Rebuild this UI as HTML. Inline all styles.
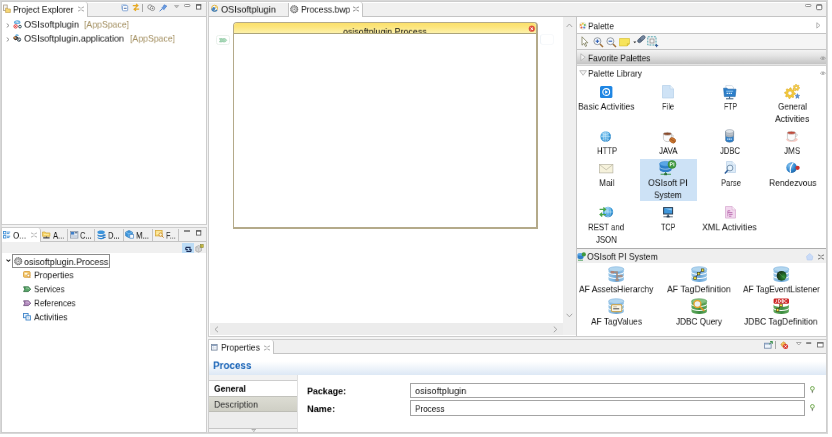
<!DOCTYPE html>
<html><head><meta charset="utf-8"><title>IDE</title>
<style>
html,body{margin:0;padding:0;}
body{width:832px;height:437px;overflow:hidden;position:relative;background:#ffffff;font-family:"Liberation Sans",sans-serif;}
body div,body span,body svg{position:absolute;display:block;box-sizing:border-box;}
body span{white-space:pre;will-change:transform;}
</style></head><body>
<div style="left:0px;top:0px;width:828px;height:434px;background:#d8d8d8;"></div>
<div style="left:2px;top:2px;width:824px;height:430px;background:#f3f3f3;"></div>
<div style="left:1px;top:1px;width:206px;height:224px;background:#fff;border:1px solid #cdcdcd;"></div>
<div style="left:2px;top:2px;width:204px;height:1px;background:#fff;"></div>
<div style="left:2px;top:3px;width:204px;height:13px;background:#f0f0f0;"></div>
<div style="left:2px;top:16px;width:204px;height:1px;background:#c4c4c4;"></div>
<div style="left:2px;top:2px;width:86px;height:15px;background:#fff;border-right:1px solid #c4c4c4;border-top-right-radius:3px;"></div>
<span style="left:13.00px;top:2px;font-size:11px;line-height:18px;color:#111;transform:scale(0.7731,0.8273);transform-origin:0 0;">Project Explorer</span>
<span style="left:24.00px;top:16px;font-size:11px;line-height:20px;color:#111;transform:scale(0.8329,0.8273);transform-origin:0 0;">OSIsoftplugin</span>
<span style="left:84.00px;top:16px;font-size:11px;line-height:20px;color:#a38f60;transform:scale(0.7912,0.8273);transform-origin:0 0;">[AppSpace]</span>
<span style="left:24.00px;top:30px;font-size:11px;line-height:20px;color:#111;transform:scale(0.8218,0.8273);transform-origin:0 0;">OSIsoftplugin.application</span>
<span style="left:130.00px;top:30px;font-size:11px;line-height:20px;color:#a38f60;transform:scale(0.7912,0.8273);transform-origin:0 0;">[AppSpace]</span>
<svg style="left:3px;top:4px" width="9" height="9" viewBox="0 0 9 9">
<rect x="0.6" y="1" width="3.6" height="5.6" fill="#f4f4f4" stroke="#a89a86" stroke-width="0.8"/>
<path d="M2.6 4.2h1.6l0.7 0.8h2.4v3.6h-4.7z" fill="#f7d774" stroke="#c9a85c" stroke-width="0.8" stroke-linejoin="round"/>
</svg>
<svg style="left:78px;top:5.5px" width="6" height="6" viewBox="0 0 6 6"><path d="M0.7 0.7l1.6 1.6 0.7-0.7 0.7 0.7 1.6-1.6M0.7 5.3l1.6-1.6 0.7 0.7 0.7-0.7 1.6 1.6M0.7 0.7v1.2M0.7 5.3v-1.2M5.3 0.7v1.2M5.3 5.3v-1.2" fill="none" stroke="#9a9a9a" stroke-width="0.7"/></svg>
<svg style="left:121px;top:3.5px" width="8" height="8" viewBox="0 0 8 8">
<rect x="0.5" y="0.5" width="5" height="5" rx="0.8" fill="#f2f7fc" stroke="#a9c2e2" stroke-width="0.8"/>
<rect x="1.5" y="1.6" width="5.2" height="5.2" rx="0.6" fill="#fff" stroke="#7fa3d4" stroke-width="0.9"/>
<rect x="2.8" y="3.8" width="2.8" height="0.9" fill="#3a5f9a"/>
</svg>
<svg style="left:132px;top:3px" width="8" height="9" viewBox="0 0 8 9">
<path d="M0.8 2.6h4.6M4 0.9l1.9 1.7-1.9 1.7" fill="none" stroke="#e6a822" stroke-width="1.2"/>
<path d="M7.2 6.2h-4.6M4 4.5l-1.9 1.7 1.9 1.7" fill="none" stroke="#e6a822" stroke-width="1.2"/>
<path d="M3.2 3.4l1.4 2" stroke="#f0c766" stroke-width="0.9"/>
</svg>
<div style="left:142px;top:3.5px;width:1px;height:8px;background:#a8a8a8;"></div>
<svg style="left:147px;top:3.5px" width="9" height="8" viewBox="0 0 9 8">
<circle cx="3" cy="3" r="2.2" fill="#f4f4f4" stroke="#8c8c8c" stroke-width="0.9"/>
<circle cx="5.4" cy="4.4" r="2.2" fill="#fafafa" stroke="#8c8c8c" stroke-width="0.9"/>
<path d="M4.6 4.4h1.8M5.5 3.5v1.8" stroke="#777" stroke-width="0.7"/>
</svg>
<svg style="left:159px;top:3.5px" width="9" height="8" viewBox="0 0 9 8">
<path d="M5.2 0.8l2.6 1.2-2.8 3.4-2-1.0z" fill="#6a9be0" stroke="#3f76c8" stroke-width="0.6" stroke-linejoin="round"/>
<path d="M3.6 4.6l-3 2.6" stroke="#3f76c8" stroke-width="0.9"/>
<path d="M2.4 3.6l3.2 2.2" stroke="#7aa7e6" stroke-width="0.8"/>
</svg>
<svg style="left:174.2px;top:5px" width="6" height="4" viewBox="0 0 6 4"><path d="M0.5 0.5h4.2l-2.1 2.4z" fill="#c4c4c4" stroke="#9a9a9a" stroke-width="0.6"/></svg>
<svg style="left:184px;top:4px" width="7" height="4" viewBox="0 0 7 4"><rect x="0.5" y="0.5" width="5.4" height="2" rx="0.8" fill="#fff" stroke="#8a8a8a" stroke-width="0.9"/></svg>
<svg style="left:196px;top:4px" width="6" height="7" viewBox="0 0 6 7"><rect x="0.5" y="0.9" width="4.3" height="4.2" fill="#fff" stroke="#5a5a5a" stroke-width="0.85"/><rect x="0.1" y="0.3" width="5.1" height="1.2" fill="#555"/></svg>
<svg style="left:6px;top:22.5px" width="4" height="5" viewBox="0 0 4 5"><path d="M0.7 0.5l2.3 2-2.3 2" fill="none" stroke="#8a8a8a" stroke-width="0.9"/></svg>
<svg style="left:6px;top:36.5px" width="4" height="5" viewBox="0 0 4 5"><path d="M0.7 0.5l2.3 2-2.3 2" fill="none" stroke="#8a8a8a" stroke-width="0.9"/></svg>
<svg style="left:12.6px;top:20.2px" width="9" height="9" viewBox="0 0 9 9">
<path d="M0.9 2.6c0-1.4 1.6-2.3 3.4-2.3s3.2 0.9 3.2 2.2c0 1.2-1.4 1.7-3.2 1.7s-3.4-0.4-3.4-1.6z" fill="#62acde"/>
<path d="M2.2 2.2h4.2M4.2 0.9v2.6M2.8 1.2l2.8 2" stroke="#e4f1fa" stroke-width="0.5"/>
<circle cx="2.6" cy="6.4" r="1.7" fill="#fff" stroke="#e03a3a" stroke-width="1"/>
<path d="M1.9 5.6l1.6 0.8-1.6 0.8z" fill="#e03a3a"/>
<circle cx="7" cy="6.6" r="1.35" fill="#f2f6f8" stroke="#2f4650" stroke-width="0.9"/>
</svg>
<svg style="left:13.2px;top:34px" width="9" height="8" viewBox="0 0 9 8">
<path d="M2 1.8c0.2-1 1.2-1.6 2.2-1.5 1 0.1 1.6 0.8 1.6 1.7z" fill="#6ab2e0"/>
<path d="M0.5 3l2.6-1 2 1.2-0.6 2.4-2.2 0.6-1.8-1.4z" fill="#3a2a22"/>
<path d="M0.6 3.2l1.4-0.6 0.6 1.4-1.2 0.8z" fill="#d98a3a"/>
<circle cx="2.8" cy="4" r="0.8" fill="#d9d2c6"/>
<circle cx="6" cy="5.6" r="1.7" fill="#f4f7f9" stroke="#34444e" stroke-width="0.9"/>
<path d="M4.2 3.4l2.6 3.6" stroke="#34444e" stroke-width="0.7"/>
</svg>
<div style="left:1px;top:227px;width:206px;height:206px;background:#fff;border:1px solid #cdcdcd;"></div>
<div style="left:2px;top:228px;width:204px;height:13px;background:#f0f0f0;"></div>
<div style="left:2px;top:241px;width:204px;height:1px;background:#c4c4c4;"></div>
<div style="left:2px;top:228px;width:39px;height:14px;background:#fff;border-right:1px solid #c4c4c4;border-top-right-radius:3px;"></div>
<span style="left:13.00px;top:227px;font-size:11px;line-height:20px;color:#111;transform:scale(0.7335,0.8273);transform-origin:0 0;">O...</span>
<span style="left:52.50px;top:227px;font-size:11px;line-height:20px;color:#111;transform:scale(0.6968,0.8273);transform-origin:0 0;">A...</span>
<span style="left:79.50px;top:227px;font-size:11px;line-height:20px;color:#111;transform:scale(0.6720,0.8273);transform-origin:0 0;">C...</span>
<span style="left:108.00px;top:227px;font-size:11px;line-height:20px;color:#111;transform:scale(0.6779,0.8273);transform-origin:0 0;">D...</span>
<span style="left:135.80px;top:227px;font-size:11px;line-height:20px;color:#111;transform:scale(0.7092,0.8273);transform-origin:0 0;">M...</span>
<span style="left:165.60px;top:227px;font-size:11px;line-height:20px;color:#111;transform:scale(0.6613,0.8273);transform-origin:0 0;">F...</span>
<div style="left:67px;top:229px;width:1px;height:12px;background:#c4c4c4;"></div>
<div style="left:94px;top:229px;width:1px;height:12px;background:#c4c4c4;"></div>
<div style="left:123px;top:229px;width:1px;height:12px;background:#c4c4c4;"></div>
<div style="left:152.3px;top:229px;width:1px;height:12px;background:#c4c4c4;"></div>
<div style="left:178.3px;top:229px;width:1px;height:12px;background:#c4c4c4;"></div>
<div style="left:2px;top:242px;width:204px;height:11.2px;background:#f0f0f0;"></div>
<div style="left:182.3px;top:243px;width:11.4px;height:10.4px;background:#bcdcf6;"></div>
<div style="left:12px;top:254.4px;width:98px;height:13.4px;background:#fff;border:1px solid #8c8c8c;"></div>
<span style="left:24.00px;top:251px;font-size:11px;line-height:26px;color:#111;transform:scale(0.8110,0.8273);transform-origin:0 0;">osisoftplugin.Process</span>
<span style="left:33.50px;top:265px;font-size:11px;line-height:24px;color:#111;transform:scale(0.7879,0.8273);transform-origin:0 0;">Properties</span>
<span style="left:33.50px;top:284px;font-size:11px;line-height:12px;color:#111;transform:scale(0.7231,0.8273);transform-origin:0 0;">Services</span>
<span style="left:33.50px;top:298px;font-size:11px;line-height:12px;color:#111;transform:scale(0.7378,0.8273);transform-origin:0 0;">References</span>
<span style="left:33.50px;top:312px;font-size:11px;line-height:12px;color:#111;transform:scale(0.7719,0.8273);transform-origin:0 0;">Activities</span>
<svg style="left:3px;top:231px" width="8" height="8" viewBox="0 0 8 8">
<rect x="0.5" y="0.5" width="2.4" height="2.4" fill="#fff" stroke="#3f8fd6" stroke-width="0.9"/>
<rect x="0.5" y="4.6" width="2.4" height="2.4" fill="#fff" stroke="#3f8fd6" stroke-width="0.9"/>
<path d="M4 1.1h3.2M4 2.6h2.4M4 5.2h3.2M4 6.6h2.4" stroke="#3f8fd6" stroke-width="0.9"/>
</svg>
<svg style="left:31px;top:232px" width="6" height="6" viewBox="0 0 6 6"><path d="M0.7 0.7l1.6 1.6 0.7-0.7 0.7 0.7 1.6-1.6M0.7 5.3l1.6-1.6 0.7 0.7 0.7-0.7 1.6 1.6M0.7 0.7v1.2M0.7 5.3v-1.2M5.3 0.7v1.2M5.3 5.3v-1.2" fill="none" stroke="#a8a8a8" stroke-width="0.7"/></svg>
<svg style="left:42px;top:231px" width="9" height="8" viewBox="0 0 9 8">
<path d="M0.5 1h2.6l0.8 0.9h4v3.4h-7.4z" fill="#f6d56a" stroke="#d2a83c" stroke-width="0.7"/>
<path d="M1.2 6.9h6.4" stroke="#1a1a1a" stroke-width="1"/><path d="M4.4 5.4v1.4" stroke="#3a3a3a" stroke-width="0.8"/>
<path d="M2 3.6h4.8" stroke="#fff2b8" stroke-width="0.7"/>
</svg>
<svg style="left:69.5px;top:231px" width="9" height="8" viewBox="0 0 9 8">
<rect x="0.5" y="0.5" width="7.4" height="6.6" fill="#e9eef5" stroke="#8b98ab" stroke-width="0.8"/>
<rect x="1" y="1" width="3.2" height="2.6" fill="#3f7fc9"/>
<rect x="4.8" y="1" width="2.6" height="1.4" fill="#6d7f96"/>
<path d="M1 5h6.4" stroke="#9fb0c6" stroke-width="0.8"/>
</svg>
<svg style="left:96.6px;top:229.6px" width="10" height="10" viewBox="0 0 10 10">
<path d="M0.5 1.8c0-0.8 1.6-1.4 3.6-1.4s3.6 0.6 3.6 1.4v0.9c0 0.8-1.6 1.4-3.6 1.4s-3.6-0.6-3.6-1.4z" fill="#3b94dc"/>
<path d="M0.5 4.2c0.6 0.7 2 1 3.6 1s3-0.3 3.6-1v1.3c0 0.8-1.6 1.4-3.6 1.4s-3.6-0.6-3.6-1.4z" fill="#2f86d2"/>
<path d="M0.5 6.9c0.6 0.7 2 1 3.6 1s3-0.3 3.6-1v0.9c0 0.8-1.6 1.4-3.6 1.4s-3.6-0.6-3.6-1.4z" fill="#2f86d2"/>
<path d="M5.6 4.4h3v1.3h-3zM5.6 6.8h3v1.3h-3z" fill="#2a78c4"/>
</svg>
<svg style="left:125px;top:230.2px" width="10" height="9" viewBox="0 0 10 9">
<path d="M4 0.4l3.4 1.8v3.6l-3.4 2-3.4-2v-3.6z" fill="#3f97dc" stroke="#1f6fb5" stroke-width="0.6"/>
<path d="M0.8 2.2l3.2 1.6 3.2-1.6M4 3.8v3.8" stroke="#9cd0f5" stroke-width="0.6" fill="none"/>
<rect x="4.8" y="4.4" width="3.6" height="3.8" fill="#f7fbff" stroke="#4a87c4" stroke-width="0.7"/>
</svg>
<svg style="left:155px;top:230.3px" width="10" height="9" viewBox="0 0 10 9">
<rect x="0.5" y="0.5" width="6.6" height="5.4" fill="#f9dc7a" stroke="#d6a93a" stroke-width="0.8"/>
<path d="M1.4 2h4.8M1.4 3.6h3" stroke="#fff4c2" stroke-width="0.8"/>
<circle cx="5.6" cy="4.6" r="1.7" fill="#fdf3cf" stroke="#c98b2e" stroke-width="0.8"/>
<path d="M6.8 5.8l1.8 1.8" stroke="#c98b2e" stroke-width="1"/>
</svg>
<div style="left:184px;top:230.3px;width:6px;height:1.5px;background:#8a8a8a;"></div>
<svg style="left:195.8px;top:229.9px" width="6" height="7" viewBox="0 0 6 7"><rect x="0.5" y="0.9" width="4.3" height="4.2" fill="#fff" stroke="#5a5a5a" stroke-width="0.85"/><rect x="0.1" y="0.3" width="5.1" height="1.2" fill="#555"/></svg>
<svg style="left:185px;top:245.5px" width="7" height="7" viewBox="0 0 7 7">
<path d="M0.8 1.4h4.8M0.8 1.4v2.4M0.8 3.6h2" stroke="#1e2f5a" stroke-width="1.2" fill="none"/>
<path d="M6 5.4h-4.6M6 5.4v-2.4M6 3.2h-2" stroke="#1e2f5a" stroke-width="1.2" fill="none"/>
</svg>
<svg style="left:195px;top:244px" width="9" height="9" viewBox="0 0 9 9">
<path d="M0.8 3l2.8-1.4 2.8 1.2v4l-2.8 1.4-2.8-1.2z" fill="#d9d9d9" stroke="#a3a3a3" stroke-width="0.7"/>
<path d="M0.8 3l2.8 1.2 2.8-1.4M3.6 4.2v4" stroke="#b9b9b9" stroke-width="0.6" fill="none"/>
<rect x="5.4" y="0.6" width="2.8" height="2.8" fill="#e8d44a" stroke="#8a8a3a" stroke-width="0.7"/>
<rect x="6.3" y="1.5" width="1" height="1" fill="#6b6b2a"/>
</svg>
<svg style="left:5.6px;top:259.2px" width="5" height="4" viewBox="0 0 5 4"><path d="M0.5 0.7l1.9 1.7 1.9-1.7" fill="none" stroke="#222" stroke-width="1.05"/></svg>
<svg style="left:13.5px;top:256.7px" width="9" height="9" viewBox="0 0 9 9">
<circle cx="4.2" cy="4.2" r="3.5" fill="#cfcfcf" stroke="#6e6e6e" stroke-width="1.1" stroke-dasharray="1.3 0.45"/>
<circle cx="4.2" cy="4.2" r="2.2" fill="#f2f2f2" stroke="#858585" stroke-width="0.6"/>
<path d="M4.2 2.4a1.8 1.8 0 0 1 1.6 2.6" fill="none" stroke="#9a9a9a" stroke-width="0.6"/>
<circle cx="4.2" cy="4.2" r="0.8" fill="#7a7a7a"/>
</svg>
<svg style="left:23px;top:271.3px" width="9" height="8" viewBox="0 0 9 8">
<rect x="0.5" y="0.5" width="6.6" height="5.8" rx="1" fill="#f4c76a" stroke="#d59a35" stroke-width="0.8"/>
<rect x="1.6" y="1.8" width="2.8" height="1.8" fill="#fff7e0"/>
<circle cx="5.4" cy="4.6" r="1.3" fill="#fff" stroke="#c98b2e" stroke-width="0.6"/>
<path d="M6.2 5.6l1.2 1.4" stroke="#c98b2e" stroke-width="0.9"/>
</svg>
<svg style="left:22.8px;top:285.8px" width="9" height="7" viewBox="0 0 9 7"><path d="M0.6 0.8h4.8l2.4 2.4-2.4 2.4h-4.8l1.2-2.4z" fill="#5aa66a" stroke="#2d6e3e" stroke-width="0.8" stroke-linejoin="round"/><path d="M3 2h2l1 1.2" stroke="#fff" stroke-opacity="0.55" stroke-width="0.7" fill="none"/></svg>
<svg style="left:22.8px;top:299.8px" width="9" height="7" viewBox="0 0 9 7"><path d="M0.6 0.8h4.8l2.4 2.4-2.4 2.4h-4.8l1.2-2.4z" fill="#b58cc0" stroke="#6a4a78" stroke-width="0.8" stroke-linejoin="round"/><path d="M3 2h2l1 1.2" stroke="#fff" stroke-opacity="0.55" stroke-width="0.7" fill="none"/></svg>
<svg style="left:23.3px;top:313.2px" width="9" height="8" viewBox="0 0 9 8">
<rect x="0.5" y="0.5" width="4.6" height="4.2" fill="#eaf3fc" stroke="#3f85c9" stroke-width="0.9"/>
<rect x="3" y="2.8" width="4.4" height="4.2" fill="#fff" stroke="#3f85c9" stroke-width="0.9"/>
<path d="M4.4 4.9h1.8" stroke="#6fa3d8" stroke-width="0.8"/>
</svg>
<div style="left:208px;top:1px;width:619px;height:336px;background:#fff;border:1px solid #cdcdcd;"></div>
<div style="left:209px;top:2px;width:617px;height:1px;background:#fff;"></div>
<div style="left:209px;top:3px;width:617px;height:13px;background:#f0f0f0;"></div>
<div style="left:209px;top:16px;width:617px;height:1px;background:#c4c4c4;"></div>
<div style="left:288px;top:3px;width:1px;height:13px;background:#c4c4c4;"></div>
<div style="left:289px;top:2px;width:74px;height:15px;background:#fff;border-right:1px solid #c4c4c4;border-top-right-radius:3px;"></div>
<span style="left:220.50px;top:1px;font-size:11px;line-height:20px;color:#111;transform:scale(0.8298,0.8273);transform-origin:0 0;">OSIsoftplugin</span>
<span style="left:300.70px;top:1px;font-size:11px;line-height:20px;color:#111;transform:scale(0.7829,0.8273);transform-origin:0 0;">Process.bwp</span>
<div style="left:210px;top:323px;width:366px;height:12px;background:#ececec;"></div>
<div style="left:563px;top:17px;width:13px;height:318px;background:#efefef;"></div>
<div style="left:233px;top:22px;width:305px;height:207px;background:#fff;border:1px solid #b4aa8a;border-right-width:2px;border-bottom-width:2px;border-radius:4px 4px 0 0;"></div>
<div style="left:234px;top:23px;width:302px;height:10.6px;background:linear-gradient(#fbe06c,#fce57c 35%,#fdf3b2);border-radius:3px 3px 0 0;"></div>
<div style="left:234px;top:23px;width:303px;height:10.6px;overflow:hidden">
<span style="left:109.20px;top:0px;font-size:11px;line-height:20px;color:#111;transform:scale(0.8043,0.8455);transform-origin:0 0;">osisoftplugin.Process</span>
</div>
<div style="left:234px;top:33.4px;width:302px;height:1px;background:#aca47a;"></div>
<div style="left:540px;top:34px;width:14px;height:11px;background:#fff;border:1px solid #f7f9fb;border-left-color:#eef3f7;border-radius:3px;"></div>
<svg style="left:210.5px;top:4.3px" width="8" height="8" viewBox="0 0 8 8">
<circle cx="3.6" cy="4.2" r="3" fill="#f4f8fc" stroke="#e2b64a" stroke-width="1"/>
<path d="M0.8 4.6a2.8 2.8 0 0 0 5.2 1.2" fill="none" stroke="#3f7fbf" stroke-width="1.3"/>
<circle cx="2.8" cy="4.4" r="1.5" fill="#3f7fbf"/>
<circle cx="4.8" cy="3.2" r="1" fill="#f1cf6a"/>
</svg>
<svg style="left:289.9px;top:4.8px" width="9" height="9" viewBox="0 0 9 9">
<circle cx="4.2" cy="4.2" r="3.5" fill="#cfcfcf" stroke="#6e6e6e" stroke-width="1.1" stroke-dasharray="1.3 0.45"/>
<circle cx="4.2" cy="4.2" r="2.2" fill="#f2f2f2" stroke="#858585" stroke-width="0.6"/>
<path d="M4.2 2.4a1.8 1.8 0 0 1 1.6 2.6" fill="none" stroke="#9a9a9a" stroke-width="0.6"/>
<circle cx="4.2" cy="4.2" r="0.8" fill="#7a7a7a"/>
</svg>
<svg style="left:353.4px;top:5.9px" width="6" height="6" viewBox="0 0 6 6"><path d="M0.7 0.7l1.6 1.6 0.7-0.7 0.7 0.7 1.6-1.6M0.7 5.3l1.6-1.6 0.7 0.7 0.7-0.7 1.6 1.6M0.7 0.7v1.2M0.7 5.3v-1.2M5.3 0.7v1.2M5.3 5.3v-1.2" fill="none" stroke="#7a7a7a" stroke-width="0.7"/></svg>
<svg style="left:805px;top:4px" width="7" height="4" viewBox="0 0 7 4"><rect x="0.5" y="0.5" width="5.4" height="2" rx="0.8" fill="#fff" stroke="#8a8a8a" stroke-width="0.9"/></svg>
<svg style="left:816.4px;top:3.6px" width="7" height="8" viewBox="0 0 7 8"><rect x="0.6" y="0.9" width="5.2" height="4.8" rx="1" fill="#fff" stroke="#666" stroke-width="0.9"/><rect x="0.4" y="0.4" width="5.6" height="1.2" rx="0.5" fill="#6a6a6a"/></svg>
<svg style="left:527.6px;top:24.7px" width="8" height="8" viewBox="0 0 8 8">
<circle cx="3.8" cy="3.7" r="2.9" fill="#e2503e" stroke="#d04a3a" stroke-width="0.4"/>
<path d="M2.6 2.5l2.4 2.4M5 2.5l-2.4 2.4" stroke="#fff" stroke-width="1"/>
</svg>
<div style="left:215.7px;top:35.4px;width:14.5px;height:9.4px;background:#fff;border:1px solid #eaf1ec;border-radius:2.5px;"></div>
<svg style="left:219px;top:38px" width="9" height="5" viewBox="0 0 9 5">
<path d="M0.4 0.6h2.6l1.6 1.7-1.6 1.7h-2.6l1-1.7z" fill="#a6d8b6" stroke="#7fbf95" stroke-width="0.5"/>
<path d="M3.6 0.6h2.6l1.6 1.7-1.6 1.7h-2.6l1.4-1.7z" fill="#b2dfc0" stroke="#7fbf95" stroke-width="0.5"/>
</svg>
<svg style="left:565.5px;top:22.8px" width="7" height="5" viewBox="0 0 7 5"><path d="M0.6 4l2.8-3 2.8 3" fill="none" stroke="#9e9e9e" stroke-width="0.9"/></svg>
<svg style="left:565.6px;top:313.2px" width="7" height="5" viewBox="0 0 7 5"><path d="M0.6 0.8l2.8 3 2.8-3" fill="none" stroke="#9e9e9e" stroke-width="0.9"/></svg>
<svg style="left:213.8px;top:325.8px" width="5" height="7" viewBox="0 0 5 7"><path d="M4 0.6l-3 2.8 3 2.8" fill="none" stroke="#9e9e9e" stroke-width="0.9"/></svg>
<svg style="left:553px;top:325.6px" width="5" height="7" viewBox="0 0 5 7"><path d="M0.8 0.6l3 2.8-3 2.8" fill="none" stroke="#9e9e9e" stroke-width="0.9"/></svg>
<div style="left:576px;top:17px;width:1px;height:319px;background:#c6c6c6;"></div>
<div style="left:577px;top:17px;width:249px;height:16px;background:#fff;"></div>
<div style="left:577px;top:33px;width:249px;height:1px;background:#c4c4c4;"></div>
<span style="left:587.60px;top:21px;font-size:11px;line-height:12px;color:#111;transform:scale(0.7534,0.8273);transform-origin:0 0;">Palette</span>
<div style="left:577px;top:34px;width:249px;height:15px;background:#f5f5f5;"></div>
<div style="left:577px;top:49px;width:249px;height:1px;background:#c4c4c4;"></div>
<div style="left:577px;top:50px;width:249px;height:13.6px;background:linear-gradient(#f3f3f3,#e4e4e4 40%,#c4c4c4);"></div>
<div style="left:577px;top:63.6px;width:249px;height:1.6px;background:#e4e4e4;"></div>
<span style="left:587.60px;top:53px;font-size:11px;line-height:12px;color:#111;transform:scale(0.7560,0.8273);transform-origin:0 0;">Favorite Palettes</span>
<div style="left:577px;top:65.2px;width:249px;height:1px;background:#d2d2d2;"></div>
<span style="left:587.60px;top:65px;font-size:11px;line-height:20px;color:#111;transform:scale(0.7600,0.8273);transform-origin:0 0;">Palette Library</span>
<div style="left:640px;top:159px;width:56.5px;height:42px;background:#cde2f6;"></div>
<span style="left:577.80px;top:98px;font-size:11px;line-height:20px;color:#111;transform:scale(0.7753,0.8273);transform-origin:0 0;">Basic Activities</span>
<span style="left:661.80px;top:98px;font-size:11px;line-height:20px;color:#111;transform:scale(0.6770,0.8273);transform-origin:0 0;">File</span>
<span style="left:723.70px;top:98px;font-size:11px;line-height:20px;color:#111;transform:scale(0.6257,0.8273);transform-origin:0 0;">FTP</span>
<span style="left:777.80px;top:98px;font-size:11px;line-height:20px;color:#111;transform:scale(0.7410,0.8273);transform-origin:0 0;">General</span>
<span style="left:775.15px;top:112px;font-size:11px;line-height:16px;color:#111;transform:scale(0.7904,0.8273);transform-origin:0 0;">Activities</span>
<span style="left:596.80px;top:144px;font-size:11px;line-height:16px;color:#111;transform:scale(0.6964,0.8273);transform-origin:0 0;">HTTP</span>
<span style="left:659.05px;top:144px;font-size:11px;line-height:16px;color:#111;transform:scale(0.7149,0.8273);transform-origin:0 0;">JAVA</span>
<span style="left:720.20px;top:144px;font-size:11px;line-height:16px;color:#111;transform:scale(0.6963,0.8273);transform-origin:0 0;">JDBC</span>
<span style="left:784.00px;top:144px;font-size:11px;line-height:16px;color:#111;transform:scale(0.7364,0.8273);transform-origin:0 0;">JMS</span>
<span style="left:598.80px;top:176px;font-size:11px;line-height:16px;color:#111;transform:scale(0.7636,0.8273);transform-origin:0 0;">Mail</span>
<span style="left:648.35px;top:176px;font-size:11px;line-height:16px;color:#111;transform:scale(0.7920,0.8273);transform-origin:0 0;">OSIsoft PI</span>
<span style="left:654.45px;top:189px;font-size:11px;line-height:14px;color:#111;transform:scale(0.7553,0.8273);transform-origin:0 0;">System</span>
<span style="left:720.60px;top:176px;font-size:11px;line-height:16px;color:#111;transform:scale(0.6960,0.8273);transform-origin:0 0;">Parse</span>
<span style="left:768.60px;top:176px;font-size:11px;line-height:16px;color:#111;transform:scale(0.7751,0.8273);transform-origin:0 0;">Rendezvous</span>
<span style="left:588.00px;top:222px;font-size:11px;line-height:12px;color:#111;transform:scale(0.7122,0.8273);transform-origin:0 0;">REST and</span>
<span style="left:595.60px;top:232px;font-size:11px;line-height:18px;color:#111;transform:scale(0.7090,0.8273);transform-origin:0 0;">JSON</span>
<span style="left:661.35px;top:222px;font-size:11px;line-height:12px;color:#111;transform:scale(0.6500,0.8273);transform-origin:0 0;">TCP</span>
<span style="left:702.45px;top:222px;font-size:11px;line-height:12px;color:#111;transform:scale(0.8037,0.8273);transform-origin:0 0;">XML Activities</span>
<div style="left:577px;top:248px;width:249px;height:1.2px;background:#adadad;"></div>
<div style="left:577px;top:249.2px;width:249px;height:14px;background:#efefef;"></div>
<span style="left:587.20px;top:249px;font-size:11px;line-height:18px;color:#111;transform:scale(0.7879,0.8273);transform-origin:0 0;">OSIsoft PI System</span>
<span style="left:579.00px;top:284px;font-size:11px;line-height:12px;color:#111;transform:scale(0.7714,0.8273);transform-origin:0 0;">AF AssetsHierarchy</span>
<span style="left:667.00px;top:284px;font-size:11px;line-height:12px;color:#111;transform:scale(0.7912,0.8273);transform-origin:0 0;">AF TagDefinition</span>
<span style="left:743.20px;top:284px;font-size:11px;line-height:12px;color:#111;transform:scale(0.7536,0.8273);transform-origin:0 0;">AF TagEventListener</span>
<span style="left:591.00px;top:313px;font-size:11px;line-height:20px;color:#111;transform:scale(0.7559,0.8273);transform-origin:0 0;">AF TagValues</span>
<span style="left:675.70px;top:313px;font-size:11px;line-height:20px;color:#111;transform:scale(0.7451,0.8273);transform-origin:0 0;">JDBC Query</span>
<span style="left:744.30px;top:313px;font-size:11px;line-height:20px;color:#111;transform:scale(0.7723,0.8273);transform-origin:0 0;">JDBC TagDefinition</span>
<svg style="left:578.8px;top:21.6px" width="8" height="8" viewBox="0 0 8 8">
<circle cx="3.8" cy="3.8" r="3.5" fill="#fbfbf6" stroke="#ddd8c8" stroke-width="0.6"/>
<circle cx="3.8" cy="1.7" r="1.05" fill="#ecd04a"/>
<circle cx="5.8" cy="3" r="1.05" fill="#6cbc66"/>
<circle cx="5.2" cy="5.5" r="1.05" fill="#5a86d8"/>
<circle cx="2.5" cy="5.5" r="1.05" fill="#e0604e"/>
<circle cx="1.8" cy="3" r="1.05" fill="#eaa04a"/>
</svg>
<svg style="left:815.8px;top:22.4px" width="6" height="8" viewBox="0 0 6 8"><path d="M0.8 0.7l3.2 2.7-3.2 2.7z" fill="#fdfdfd" stroke="#a4a4a4" stroke-width="0.8"/></svg>
<svg style="left:580.5px;top:36px" width="8" height="12" viewBox="0 0 8 12"><path d="M1 0.8v8.4l2-1.9 1.5 3.2 1.2-0.6-1.5-3.1h2.7z" fill="#fff" stroke="#7f7f5e" stroke-width="0.8" stroke-linejoin="round"/></svg>
<svg style="left:592.6px;top:36.5px" width="11" height="11" viewBox="0 0 11 11"><circle cx="4.4" cy="4.2" r="3.5" fill="#f2f6fb" stroke="#8f959c" stroke-width="0.9"/><path d="M7 7l3 3" stroke="#a0723c" stroke-width="1.5"/><path d="M2.6 4.2h3.6" stroke="#2f5fb5" stroke-width="1.1"/><path d="M4.4 2.4v3.6" stroke="#2f5fb5" stroke-width="1.1"/></svg>
<svg style="left:606px;top:36.5px" width="11" height="11" viewBox="0 0 11 11"><circle cx="4.4" cy="4.2" r="3.5" fill="#f2f6fb" stroke="#8f959c" stroke-width="0.9"/><path d="M7 7l3 3" stroke="#a0723c" stroke-width="1.5"/><path d="M2.6 4.2h3.6" stroke="#2f5fb5" stroke-width="1.1"/></svg>
<svg style="left:619px;top:38px" width="11" height="9" viewBox="0 0 11 9"><path d="M0.5 0.5h10v5.2l-2.2 2.2h-7.8z" fill="#f7e45a" stroke="#d9c23a" stroke-width="0.7"/><path d="M10.5 5.7h-2.2v2.2" fill="#e9d040" stroke="#c9b132" stroke-width="0.6"/></svg>
<svg style="left:632.6px;top:40.8px" width="4" height="3" viewBox="0 0 4 3"><path d="M0.3 0.4h3l-1.5 1.8z" fill="#333"/></svg>
<svg style="left:636.6px;top:35.2px" width="10" height="9" viewBox="0 0 10 9">
<ellipse cx="3.2" cy="5.2" rx="2.9" ry="1.9" transform="rotate(-40 3.2 5.2)" fill="#62748c" stroke="#46566c" stroke-width="0.6"/>
<ellipse cx="5.6" cy="3" rx="2.9" ry="1.9" transform="rotate(-40 5.6 3)" fill="#74869e" stroke="#46566c" stroke-width="0.6"/>
</svg>
<svg style="left:647px;top:35.6px" width="12" height="12" viewBox="0 0 12 12">
<rect x="0.8" y="0.8" width="8.2" height="8.2" fill="none" stroke="#3f9aa6" stroke-width="0.9" stroke-dasharray="2 1"/>
<rect x="3" y="3" width="4" height="4" fill="#f2f2f2" stroke="#8f8f8f" stroke-width="0.8"/>
<path d="M9.6 8v3.2M8 9.6h3.2" stroke="#3a5f9a" stroke-width="1"/>
</svg>
<svg style="left:579.6px;top:52.5px" width="7" height="9" viewBox="0 0 7 9"><path d="M0.8 0.8l4.4 3.4-4.4 3.4z" fill="#f4f4f4" stroke="#b0b0b0" stroke-width="0.8"/></svg>
<svg style="left:579.3px;top:70px" width="9" height="7" viewBox="0 0 9 7"><path d="M0.7 0.7h6.8l-3.4 4.6z" fill="#f4f4f4" stroke="#b0b0b0" stroke-width="0.8"/></svg>
<svg style="left:819.8px;top:55.8px" width="6" height="5" viewBox="0 0 6 5"><path d="M0.4 2.2l1.4-1.4M0.4 2.2l1.4 1.4M5.4 2.2l-1.4-1.4M5.4 2.2l-1.4 1.4M2.4 0.6v3.2M3.4 0.6v3.2" fill="none" stroke="#8f8f8f" stroke-width="0.7"/></svg>
<svg style="left:819.8px;top:71px" width="6" height="5" viewBox="0 0 6 5"><path d="M0.4 2.2l1.4-1.4M0.4 2.2l1.4 1.4M5.4 2.2l-1.4-1.4M5.4 2.2l-1.4 1.4M2.4 0.6v3.2M3.4 0.6v3.2" fill="none" stroke="#8f8f8f" stroke-width="0.7"/></svg>
<svg style="left:600px;top:85.5px" width="13" height="13" viewBox="0 0 13 13">
<rect x="0" y="0" width="12.4" height="12" rx="1.6" fill="#1f86e3"/>
<circle cx="6.2" cy="6" r="3.4" fill="none" stroke="#fff" stroke-width="1.1"/>
<path d="M5.2 4.3l2.8 1.7-2.8 1.7z" fill="#fff"/>
</svg>
<svg style="left:662.2px;top:84.8px" width="12" height="14" viewBox="0 0 12 14"><path d="M0.5 0.5h7.6 l3.4 3.4v9.1h-11z" fill="#cfe3f6" stroke="#b4d0ea" stroke-width="0.7" stroke-linejoin="round"/><path d="M8.1 0.5v3.4h3.4" fill="#fff" fill-opacity="0.6" stroke="#b4d0ea" stroke-width="0.6"/></svg>
<svg style="left:723.4px;top:84.6px" width="14" height="15" viewBox="0 0 14 15">
<path d="M2.8 0.6h6l1.6 1.4v2.4h-7.6z" fill="#fff" stroke="#b9c7d6" stroke-width="0.6"/>
<path d="M0.6 3.2h3.4l1 1h8l-0.8 7.4h-10.8z" fill="#2c7ec9" stroke="#1d65a8" stroke-width="0.6"/>
<path d="M3.2 6.2h7" stroke="#9fd0f5" stroke-width="0.9"/>
<path d="M3.6 8.4h6" stroke="#d7ecfb" stroke-width="1.2" stroke-dasharray="1.4 0.6"/>
<path d="M6.6 11.6v2M3 13.8h7.4" stroke="#355a7d" stroke-width="1"/>
</svg>
<svg style="left:783.5px;top:83.6px" width="16" height="15" viewBox="0 0 16 15"><path d="M11.40 9.20 L11.30 10.25 L9.69 10.73 L9.32 11.42 L9.82 13.02 L9.00 13.69 L7.53 12.89 L6.78 13.12 L6.00 14.60 L4.95 14.50 L4.47 12.89 L3.78 12.52 L2.18 13.02 L1.51 12.20 L2.31 10.73 L2.08 9.98 L0.60 9.20 L0.70 8.15 L2.31 7.67 L2.68 6.98 L2.18 5.38 L3.00 4.71 L4.47 5.51 L5.22 5.28 L6.00 3.80 L7.05 3.90 L7.53 5.51 L8.22 5.88 L9.82 5.38 L10.49 6.20 L9.69 7.67 L9.92 8.42z" fill="#f3c93a" stroke="#d8a420" stroke-width="0.5" stroke-linejoin="round"/><circle cx="6" cy="9.2" r="2.1" fill="#fff" stroke="#d8a420" stroke-width="0.5"/><path d="M15.60 3.60 L15.52 4.33 L14.50 4.66 L14.21 5.12 L14.36 6.18 L13.73 6.57 L12.84 5.98 L12.30 6.04 L11.57 6.82 L10.87 6.57 L10.78 5.51 L10.39 5.12 L9.33 5.03 L9.08 4.33 L9.86 3.60 L9.92 3.06 L9.33 2.17 L9.72 1.54 L10.78 1.69 L11.24 1.40 L11.57 0.38 L12.30 0.30 L12.84 1.22 L13.36 1.40 L14.36 1.02 L14.88 1.54 L14.50 2.54 L14.68 3.06z" fill="#f5cf4a" stroke="#d8a420" stroke-width="0.5" stroke-linejoin="round"/><circle cx="12.3" cy="3.6" r="1.2" fill="#fff" stroke="#d8a420" stroke-width="0.5"/><path d="M13.4 9.6l0.7 1.6 1.7 0.2-1.3 1.2 0.4 1.8-1.5-0.9-1.5 0.9 0.4-1.8-1.3-1.2 1.7-0.2z" fill="#5a8fd0" stroke="#3f6fb0" stroke-width="0.4"/></svg>
<svg style="left:600.2px;top:131px" width="12" height="12" viewBox="0 0 12 12">
<defs><radialGradient id="gl" cx="0.4" cy="0.35" r="0.7"><stop offset="0" stop-color="#9fd6f7"/><stop offset="0.6" stop-color="#3f9fdc"/><stop offset="1" stop-color="#2b7fc0"/></radialGradient></defs>
<circle cx="5.7" cy="5.6" r="5.3" fill="url(#gl)"/>
<path d="M5.7 0.6v10M0.7 5.6h10M2.2 2.2c2 1.6 5 1.6 7 0M2.2 9c2-1.6 5-1.6 7 0" stroke="#d3edfb" stroke-width="0.6" fill="none" stroke-opacity="0.85"/>
<ellipse cx="5.7" cy="5.6" rx="2.4" ry="5" fill="none" stroke="#d3edfb" stroke-width="0.6" stroke-opacity="0.85"/>
</svg>
<svg style="left:662px;top:130.6px" width="13" height="13" viewBox="0 0 13 13"><path d="M1.4 2.8h8v4.4c0 2-1.6 3.4-4 3.4s-4-1.4-4-3.4z" fill="#fbfbfb" stroke="#b9b9b9" stroke-width="0.7"/>
<path d="M9.4 4h1.2c0.9 0 0.9 2.6-1.4 2.8" fill="none" stroke="#b9b9b9" stroke-width="0.8"/>
<ellipse cx="5.4" cy="2.8" rx="4" ry="1.5" fill="#8a4a2a" stroke="#c9c9c9" stroke-width="0.6"/></svg>
<svg style="left:669.4px;top:137.4px" width="8" height="7" viewBox="0 0 8 7"><ellipse cx="3.6" cy="3.3" rx="3.2" ry="2.6" transform="rotate(30 3.6 3.3)" fill="#c9742e" stroke="#9a5420" stroke-width="0.5"/><path d="M1.4 2l4.4 2.6" stroke="#8a4818" stroke-width="0.6"/></svg>
<svg style="left:725px;top:129.4px" width="10" height="14" viewBox="0 0 10 14">
<path d="M0.6 2.4v8.8c0 1.2 1.8 2 4 2s4-0.8 4-2v-8.8z" fill="#2f7fc9" stroke="#4a6a8a" stroke-width="0.5"/>
<path d="M0.6 2.4v3.8c0 1.2 1.8 2 4 2s4-0.8 4-2v-3.8z" fill="#b9c1c9" stroke="#7f8a96" stroke-width="0.5"/>
<ellipse cx="4.6" cy="2.4" rx="4" ry="1.9" fill="#dfe4e9" stroke="#8f99a4" stroke-width="0.5"/>
<path d="M0.6 5c0 1.2 1.8 2 4 2s4-0.8 4-2" fill="none" stroke="#8f99a4" stroke-width="0.5"/>
<path d="M2.2 10.2h4.8" stroke="#d6ebfb" stroke-width="1.3" stroke-dasharray="1.2 0.5"/>
</svg>
<svg style="left:786px;top:130.4px" width="13" height="13" viewBox="0 0 13 13"><ellipse cx="6" cy="9.6" rx="5.8" ry="2.2" fill="#f6c9c2"/><path d="M1.4 2.8h8v4.4c0 2-1.6 3.4-4 3.4s-4-1.4-4-3.4z" fill="#fbfbfb" stroke="#b9b9b9" stroke-width="0.7"/>
<path d="M9.4 4h1.2c0.9 0 0.9 2.6-1.4 2.8" fill="none" stroke="#b9b9b9" stroke-width="0.8"/>
<ellipse cx="5.4" cy="2.8" rx="4" ry="1.5" fill="#c04a3a" stroke="#c9c9c9" stroke-width="0.6"/></svg>
<svg style="left:599.3px;top:163.6px" width="15" height="10" viewBox="0 0 15 10"><rect x="0.5" y="0.5" width="13.4" height="8.4" fill="#f6f2dc" stroke="#b8b4a2" stroke-width="0.7"/><path d="M0.8 0.8l6.4 5 6.4-5" fill="none" stroke="#b8b4a2" stroke-width="0.7"/></svg>
<svg style="left:659.4px;top:160px" width="18" height="16" viewBox="0 0 18 16">
<path d="M0.6 3.8v5.6c0 1.5 2.7 2.6 6 2.6s6-1.1 6-2.6v-5.6z" fill="#2f7fc9"/>
<ellipse cx="6.6" cy="3.8" rx="6" ry="2.4" fill="#5aa6e6" stroke="#2f7fc9" stroke-width="0.5"/>
<path d="M0.6 6.6c0 1.5 2.7 2.6 6 2.6s6-1.1 6-2.6" fill="none" stroke="#bfe0f9" stroke-width="0.7"/>
<circle cx="13" cy="4.4" r="4" fill="#3f9a3f" stroke="#2b7a2b" stroke-width="0.5"/>
<path d="M11.3 6.2v-3.6h1.3c1.3 0 1.3 1.9 0 1.9h-1.3M14.8 2.6v3.6" stroke="#fff" stroke-width="0.8" fill="none"/>
<path d="M6.6 12v2M1.6 14.2h10.4" stroke="#3f9a4f" stroke-width="1.1"/>
<rect x="5.2" y="13.2" width="2.8" height="2" fill="#2d6e3e"/>
</svg>
<svg style="left:726.4px;top:161.2px" width="10" height="12.5" viewBox="0 0 10 12.5"><path d="M0.5 0.5h5.6 l3.4 3.4v7.6h-9z" fill="#dcebf8" stroke="#b9d0e6" stroke-width="0.7" stroke-linejoin="round"/><path d="M6.1 0.5v3.4h3.4" fill="#fff" fill-opacity="0.6" stroke="#b9d0e6" stroke-width="0.6"/></svg>
<svg style="left:724px;top:164px" width="10" height="11" viewBox="0 0 10 11"><circle cx="6" cy="4" r="2.9" fill="#e9f4fd" fill-opacity="0.85" stroke="#6f8aa6" stroke-width="0.9"/><path d="M3.8 6.2l-3 3.2" stroke="#2f5f9a" stroke-width="1.4"/></svg>
<svg style="left:786.3px;top:162px" width="15" height="12" viewBox="0 0 15 12">
<defs><radialGradient id="rz" cx="0.35" cy="0.3" r="0.8"><stop offset="0" stop-color="#8fc9f2"/><stop offset="0.6" stop-color="#2f86cf"/><stop offset="1" stop-color="#1d5fa0"/></radialGradient></defs>
<circle cx="5.6" cy="5.6" r="5.3" fill="url(#rz)"/>
<path d="M7.2 0.8c-2.6 2.6-3.6 6-2.6 9.8" stroke="#fff" stroke-width="1.2" fill="none"/>
<circle cx="11.6" cy="5.8" r="2.1" fill="#c9332e"/>
</svg>
<svg style="left:598.6px;top:205.8px" width="15" height="12" viewBox="0 0 15 12">
<circle cx="9" cy="6" r="5.2" fill="url(#gl)"/>
<path d="M9 0.9v10.2M3.9 6h10.2" stroke="#d3edfb" stroke-width="0.6" stroke-opacity="0.8"/>
<ellipse cx="9" cy="6" rx="2.4" ry="5" fill="none" stroke="#d3edfb" stroke-width="0.6" stroke-opacity="0.8"/>
<path d="M0.6 3.4h5.4M4.4 1.6l2 1.8-2 1.8" stroke="#4aa64a" stroke-width="1.4" fill="none"/>
<path d="M7 8.6h-5.4M3.2 6.8l-2 1.8 2 1.8" stroke="#4aa64a" stroke-width="1.4" fill="none"/>
</svg>
<svg style="left:663.4px;top:206.8px" width="11" height="11" viewBox="0 0 11 11">
<rect x="0.6" y="0.6" width="9" height="6.4" fill="#3f97dc" stroke="#2a3f55" stroke-width="1"/>
<path d="M1.4 1.4h7.4v2.2z" fill="#8fcaf3"/>
<path d="M5.1 7.4v1.8" stroke="#2a3f55" stroke-width="1.4"/>
<path d="M0.4 9.8h9.4" stroke="#4f5f6f" stroke-width="0.9"/>
<rect x="3.6" y="8.8" width="3" height="1.6" fill="#2a3f55"/>
</svg>
<svg style="left:724.6px;top:205.8px" width="11" height="13.1" viewBox="0 0 11 13.1"><path d="M0.5 0.5h6.6 l3.4 3.4v8.2h-10z" fill="#f2d7ee" stroke="#d6a6cf" stroke-width="0.7" stroke-linejoin="round"/><path d="M7.1 0.5v3.4h3.4" fill="#fff" fill-opacity="0.6" stroke="#d6a6cf" stroke-width="0.6"/></svg>
<svg style="left:727px;top:209.8px" width="7" height="8" viewBox="0 0 7 8"><path d="M0.8 0.8h2.4M0.8 2.6h4.6M2 4.4h3.6M2 6.2h2.4" stroke="#b86aae" stroke-width="0.9"/><path d="M0.8 0.8v5.6" stroke="#b86aae" stroke-width="0.7"/></svg>
<svg style="left:577.2px;top:251.8px" width="10" height="9" viewBox="0 0 10 9">
<path d="M0.5 2.4v3.4c0 0.8 1.4 1.4 3 1.4s3-0.6 3-1.4v-3.4z" fill="#2f7fc9"/>
<ellipse cx="3.5" cy="2.4" rx="3" ry="1.3" fill="#5aa6e6"/>
<circle cx="6.8" cy="2.4" r="2.1" fill="#3f9a3f"/>
<path d="M1 8.2h5" stroke="#3f9a4f" stroke-width="0.9"/>
</svg>
<svg style="left:806.3px;top:252.6px" width="8" height="8" viewBox="0 0 8 8"><path d="M0.5 3.4l3.2-2.9 3.2 2.9-0.8 3.6h-4.8z" fill="#c9dbf8" stroke="#b4cbf0" stroke-width="0.6" stroke-linejoin="round"/></svg>
<svg style="left:817.6px;top:253.8px" width="6" height="6" viewBox="0 0 6 6"><path d="M0.7 0.7l1.6 1.6 0.7-0.7 0.7 0.7 1.6-1.6M0.7 5.3l1.6-1.6 0.7 0.7 0.7-0.7 1.6 1.6M0.7 0.7v1.2M0.7 5.3v-1.2M5.3 0.7v1.2M5.3 5.3v-1.2" fill="none" stroke="#5a5a5a" stroke-width="0.7"/></svg>
<svg style="left:608.4px;top:265.6px" width="17" height="17" viewBox="0 0 17 17"><defs><linearGradient id="dbg1" x1="0" x2="1"><stop offset="0" stop-color="#98c6e8"/><stop offset="0.55" stop-color="#6aa6d8"/><stop offset="1" stop-color="#98c6e8"/></linearGradient></defs><path d="M0.5 3.2 A7.7 2.5 0 0 0 15.9 3.2 L15.9 5.4 A7.7 2.5 0 0 1 0.5 5.4 Z" fill="url(#dbg1)"/><ellipse cx="8.2" cy="3.2" rx="7.7" ry="2.5" fill="#b2d6ef" stroke="#6aa6d8" stroke-width="0.5"/><path d="M0.5 6.5 A7.7 2.5 0 0 0 15.9 6.5 L15.9 9.5 A7.7 2.5 0 0 1 0.5 9.5 Z" fill="url(#dbg1)"/><path d="M0.5 10.6 A7.7 2.5 0 0 0 15.9 10.6 L15.9 13.6 A7.7 2.5 0 0 1 0.5 13.6 Z" fill="url(#dbg1)"/><path d="M4.6 6.2h4.4v7.6M9 10h4" fill="none" stroke="#a08c84" stroke-width="1.7"/><rect x="2.6" y="5" width="3.4" height="2.4" fill="#b08478"/><rect x="11.6" y="8.8" width="3" height="2.4" fill="#a89088"/><rect x="7.6" y="12.6" width="3.2" height="2.6" fill="#a08c84"/></svg>
<svg style="left:690.6px;top:265.8px" width="17" height="17" viewBox="0 0 17 17"><defs><linearGradient id="dbg2" x1="0" x2="1"><stop offset="0" stop-color="#98c6e8"/><stop offset="0.55" stop-color="#6aa6d8"/><stop offset="1" stop-color="#98c6e8"/></linearGradient></defs><path d="M0.5 3.2 A7.7 2.5 0 0 0 15.9 3.2 L15.9 5.4 A7.7 2.5 0 0 1 0.5 5.4 Z" fill="url(#dbg2)"/><ellipse cx="8.2" cy="3.2" rx="7.7" ry="2.5" fill="#b2d6ef" stroke="#6aa6d8" stroke-width="0.5"/><path d="M0.5 6.5 A7.7 2.5 0 0 0 15.9 6.5 L15.9 9.5 A7.7 2.5 0 0 1 0.5 9.5 Z" fill="url(#dbg2)"/><path d="M0.5 10.6 A7.7 2.5 0 0 0 15.9 10.6 L15.9 13.6 A7.7 2.5 0 0 1 0.5 13.6 Z" fill="url(#dbg2)"/><path d="M4 12.2l3.6-4.6 4-3.4" fill="none" stroke="#27306a" stroke-width="0.9"/><rect x="2.7" y="10.9" width="2.6" height="2.6" fill="#f2e23a" stroke="#3a3a1a" stroke-width="0.6"/><rect x="6.3" y="6.3" width="2.6" height="2.6" fill="#f2e23a" stroke="#3a3a1a" stroke-width="0.6"/><rect x="10.3" y="2.9" width="2.6" height="2.6" fill="#f2e23a" stroke="#3a3a1a" stroke-width="0.6"/></svg>
<svg style="left:773px;top:265.6px" width="17" height="17" viewBox="0 0 17 17"><defs><linearGradient id="dbg3" x1="0" x2="1"><stop offset="0" stop-color="#98c6e8"/><stop offset="0.55" stop-color="#6aa6d8"/><stop offset="1" stop-color="#98c6e8"/></linearGradient></defs><path d="M0.5 3.2 A7.7 2.5 0 0 0 15.9 3.2 L15.9 5.4 A7.7 2.5 0 0 1 0.5 5.4 Z" fill="url(#dbg3)"/><ellipse cx="8.2" cy="3.2" rx="7.7" ry="2.5" fill="#b2d6ef" stroke="#6aa6d8" stroke-width="0.5"/><path d="M0.5 6.5 A7.7 2.5 0 0 0 15.9 6.5 L15.9 9.5 A7.7 2.5 0 0 1 0.5 9.5 Z" fill="url(#dbg3)"/><path d="M0.5 10.6 A7.7 2.5 0 0 0 15.9 10.6 L15.9 13.6 A7.7 2.5 0 0 1 0.5 13.6 Z" fill="url(#dbg3)"/><defs><radialGradient id="rad" cx="0.7" cy="0.6" r="0.7"><stop offset="0" stop-color="#2f9a35"/><stop offset="0.5" stop-color="#1f5a25"/><stop offset="1" stop-color="#18301a"/></radialGradient></defs><circle cx="8.6" cy="9.8" r="4.9" fill="url(#rad)"/><path d="M8.6 9.8l-2.8-3M8.6 9.8l3.4 2.4" stroke="#5a8a5a" stroke-width="0.6"/></svg>
<svg style="left:608.4px;top:297.8px" width="17" height="17" viewBox="0 0 17 17"><defs><linearGradient id="dbg4" x1="0" x2="1"><stop offset="0" stop-color="#98c6e8"/><stop offset="0.55" stop-color="#6aa6d8"/><stop offset="1" stop-color="#98c6e8"/></linearGradient></defs><path d="M0.5 3.2 A7.7 2.5 0 0 0 15.9 3.2 L15.9 5.4 A7.7 2.5 0 0 1 0.5 5.4 Z" fill="url(#dbg4)"/><ellipse cx="8.2" cy="3.2" rx="7.7" ry="2.5" fill="#b2d6ef" stroke="#6aa6d8" stroke-width="0.5"/><path d="M0.5 6.5 A7.7 2.5 0 0 0 15.9 6.5 L15.9 9.5 A7.7 2.5 0 0 1 0.5 9.5 Z" fill="url(#dbg4)"/><path d="M0.5 10.6 A7.7 2.5 0 0 0 15.9 10.6 L15.9 13.6 A7.7 2.5 0 0 1 0.5 13.6 Z" fill="url(#dbg4)"/><rect x="3.4" y="6.6" width="10.4" height="7" rx="1.4" fill="#fbf6e6" stroke="#c9a85a" stroke-width="1.1"/><path d="M5.2 10.8h6" stroke="#4a4a4a" stroke-width="1"/><path d="M5.2 8.8h3.6" stroke="#b0a890" stroke-width="0.8"/></svg>
<svg style="left:690.6px;top:298px" width="17" height="17" viewBox="0 0 17 17"><defs><linearGradient id="dbg5" x1="0" x2="1"><stop offset="0" stop-color="#62aa5e"/><stop offset="0.55" stop-color="#3c8c40"/><stop offset="1" stop-color="#62aa5e"/></linearGradient></defs><path d="M0.5 3.2 A7.7 2.5 0 0 0 15.9 3.2 L15.9 5.4 A7.7 2.5 0 0 1 0.5 5.4 Z" fill="url(#dbg5)"/><ellipse cx="8.2" cy="3.2" rx="7.7" ry="2.5" fill="#86c281" stroke="#3c8c40" stroke-width="0.5"/><path d="M0.5 6.5 A7.7 2.5 0 0 0 15.9 6.5 L15.9 9.5 A7.7 2.5 0 0 1 0.5 9.5 Z" fill="url(#dbg5)"/><path d="M0.5 10.6 A7.7 2.5 0 0 0 15.9 10.6 L15.9 13.6 A7.7 2.5 0 0 1 0.5 13.6 Z" fill="url(#dbg5)"/><circle cx="6.4" cy="6" r="3.5" fill="#eef1f2" stroke="#e6a52e" stroke-width="1.4"/><path d="M9.2 8.8l4 4.2" stroke="#de982a" stroke-width="1.8"/></svg>
<svg style="left:773px;top:298px" width="17" height="17" viewBox="0 0 17 17"><defs><linearGradient id="dbg6" x1="0" x2="1"><stop offset="0" stop-color="#62aa5e"/><stop offset="0.55" stop-color="#3c8c40"/><stop offset="1" stop-color="#62aa5e"/></linearGradient></defs><path d="M0.5 6.5 A7.7 2.5 0 0 0 15.9 6.5 L15.9 9.5 A7.7 2.5 0 0 1 0.5 9.5 Z" fill="url(#dbg6)"/><path d="M0.5 10.6 A7.7 2.5 0 0 0 15.9 10.6 L15.9 13.6 A7.7 2.5 0 0 1 0.5 13.6 Z" fill="url(#dbg6)"/><rect x="0.6" y="0.4" width="15.4" height="5.4" rx="1.4" fill="#cc2424"/><path d="M3.4 1.6v2.2c0 0.9-1.1 0.9-1.3 0.2M5.4 1.5v3h0.9c1.7 0 1.7-3 0-3zM9 1.5v3h1.1c1 0 1-1.5 0-1.5h-1.1 0.9c0.9 0 0.9-1.5 0-1.5zM14.2 2.1c-1-1.2-2.6-0.3-2.6 0.9s1.6 2.1 2.6 0.9" fill="none" stroke="#fff" stroke-width="0.75"/><path d="M4.6 12l3.4-4.4" stroke="#2a2a2a" stroke-width="0.7"/><rect x="6.7" y="6.1" width="2.6" height="2.6" fill="#f2e23a" stroke="#3a3a1a" stroke-width="0.6"/><rect x="3.3" y="10.7" width="2.6" height="2.6" fill="#f2e23a" stroke="#3a3a1a" stroke-width="0.6"/></svg>
<div style="left:208px;top:339px;width:619px;height:94px;background:#fff;border:1px solid #cdcdcd;"></div>
<div style="left:209px;top:340px;width:617px;height:13px;background:#f0f0f0;"></div>
<div style="left:209px;top:353px;width:617px;height:1px;background:#c4c4c4;"></div>
<div style="left:209px;top:340px;width:65px;height:14px;background:#fff;border-right:1px solid #c4c4c4;border-top-right-radius:3px;"></div>
<span style="left:221.00px;top:339px;font-size:11px;line-height:20px;color:#111;transform:scale(0.7739,0.8273);transform-origin:0 0;">Properties</span>
<div style="left:209px;top:354px;width:617px;height:21px;background:linear-gradient(#fff 35%,#dde8f5);"></div>
<span style="left:212.70px;top:359px;font-size:12px;line-height:16px;color:#1762b6;transform:scale(0.8223,0.8333);transform-origin:0 0;font-weight:bold;">Process</span>
<div style="left:209px;top:375px;width:89px;height:57px;background:#ededed;"></div>
<div style="left:209px;top:375px;width:89px;height:6px;background:#f2f2f2;border-bottom:1px solid #cdcdcd;"></div>
<div style="left:209px;top:381px;width:89px;height:15px;background:#fff;"></div>
<span style="left:213.90px;top:381px;font-size:11px;line-height:18px;color:#000;transform:scale(0.7763,0.8273);transform-origin:0 0;font-weight:bold;">General</span>
<div style="left:209px;top:396px;width:89px;height:16px;background:linear-gradient(#dcdcd3,#cfcfc5);border-top:1px solid #c2c2bc;border-bottom:1px solid #bdbdb6;"></div>
<span style="left:213.90px;top:396px;font-size:11px;line-height:20px;color:#2a2a2a;transform:scale(0.7997,0.8273);transform-origin:0 0;">Description</span>
<div style="left:209px;top:428px;width:89px;height:1px;background:#c6c6c6;"></div>
<div style="left:209px;top:429px;width:89px;height:3px;background:#f4f4f4;"></div>
<div style="left:297px;top:375px;width:1px;height:57px;background:#e0e0e0;"></div>
<span style="left:307.00px;top:386px;font-size:11px;line-height:12px;color:#000;transform:scale(0.8073,0.8273);transform-origin:0 0;font-weight:bold;">Package:</span>
<span style="left:307.00px;top:403px;font-size:11px;line-height:14px;color:#000;transform:scale(0.8328,0.8273);transform-origin:0 0;font-weight:bold;">Name:</span>
<div style="left:410px;top:382.6px;width:395px;height:15.2px;background:#fff;border:1px solid #a4a4a4;"></div>
<div style="left:410px;top:400.4px;width:395px;height:15.2px;background:#fff;border:1px solid #a4a4a4;"></div>
<span style="left:414.60px;top:380px;font-size:11px;line-height:26px;color:#111;transform:scale(0.8406,0.8273);transform-origin:0 0;">osisoftplugin</span>
<span style="left:414.60px;top:402px;font-size:11px;line-height:16px;color:#111;transform:scale(0.7399,0.8273);transform-origin:0 0;">Process</span>
<svg style="left:211.4px;top:343.8px" width="7" height="7" viewBox="0 0 7 7"><rect x="0.5" y="0.5" width="5.6" height="5.6" fill="#f4f7fb" stroke="#6f7f96" stroke-width="0.8"/><rect x="0.5" y="0.5" width="5.6" height="1.5" fill="#8fa3c0"/><path d="M2.4 2v4M0.6 3.8h5.4" stroke="#c2cede" stroke-width="0.5"/></svg>
<svg style="left:263.8px;top:344.6px" width="6" height="6" viewBox="0 0 6 6"><path d="M0.7 0.7l1.6 1.6 0.7-0.7 0.7 0.7 1.6-1.6M0.7 5.3l1.6-1.6 0.7 0.7 0.7-0.7 1.6 1.6M0.7 0.7v1.2M0.7 5.3v-1.2M5.3 0.7v1.2M5.3 5.3v-1.2" fill="none" stroke="#9a9a9a" stroke-width="0.7"/></svg>
<svg style="left:764px;top:341.4px" width="10" height="8" viewBox="0 0 10 8">
<rect x="0.5" y="2.2" width="6.6" height="5" fill="#eef4fb" stroke="#6f86a6" stroke-width="0.8"/>
<rect x="0.5" y="2.2" width="6.6" height="1.3" fill="#8fa6c6"/>
<path d="M5.2 3.2l3-2.6M8.4 0.5v2.3M8.4 0.5h-2.3" stroke="#2f8a3f" stroke-width="0.9" fill="none"/>
</svg>
<div style="left:775.2px;top:340.6px;width:1px;height:8.2px;background:#a8a8a8;"></div>
<svg style="left:779.8px;top:340.6px" width="10" height="9" viewBox="0 0 10 9">
<path d="M0.8 3.2l2.6-2.4 2.2 1.2-0.4 3.2-2.6 0.9z" fill="#f0b24a" stroke="#c9832a" stroke-width="0.5"/>
<circle cx="2.6" cy="2.4" r="0.9" fill="#e8d070"/>
<circle cx="5.6" cy="5.4" r="2.5" fill="#d9362e"/>
<path d="M4.5 4.3l2.2 2.2M6.7 4.3l-2.2 2.2" stroke="#fff" stroke-width="0.85"/>
</svg>
<svg style="left:796px;top:341.8px" width="7" height="4" viewBox="0 0 7 4"><path d="M0.5 0.5h4.6l-2.3 2.5z" fill="#fff" stroke="#8a8a8a" stroke-width="0.7"/></svg>
<svg style="left:806px;top:342px" width="7" height="3" viewBox="0 0 7 3"><rect x="0.2" y="0.3" width="5" height="1.5" fill="#6a6a6a"/></svg>
<svg style="left:816.8px;top:341.6px" width="8" height="7" viewBox="0 0 8 7"><rect x="0.5" y="0.8" width="5.6" height="4.2" fill="#fff" stroke="#666" stroke-width="0.8"/><rect x="0.2" y="0.3" width="6.2" height="1.2" fill="#666"/></svg>
<svg style="left:809.6px;top:386.2px" width="5" height="8" viewBox="0 0 5 8"><circle cx="2.4" cy="2.4" r="1.9" fill="#f4fbea" stroke="#5a9a3a" stroke-width="0.8"/><path d="M1.7 4.4h1.4v1.6h-1.4z" fill="#7a8a6a"/><path d="M1.8 6.6h1.2" stroke="#555" stroke-width="0.6"/></svg>
<svg style="left:809.6px;top:404.2px" width="5" height="8" viewBox="0 0 5 8"><circle cx="2.4" cy="2.4" r="1.9" fill="#f4fbea" stroke="#5a9a3a" stroke-width="0.8"/><path d="M1.7 4.4h1.4v1.6h-1.4z" fill="#7a8a6a"/><path d="M1.8 6.6h1.2" stroke="#555" stroke-width="0.6"/></svg>
<svg style="left:251px;top:429.2px" width="6" height="3" viewBox="0 0 6 3"><path d="M0.6 0.4h4.4M1.6 1.4l1.2 1 1.2-1" stroke="#777" stroke-width="0.6" fill="none"/></svg>
</body></html>
